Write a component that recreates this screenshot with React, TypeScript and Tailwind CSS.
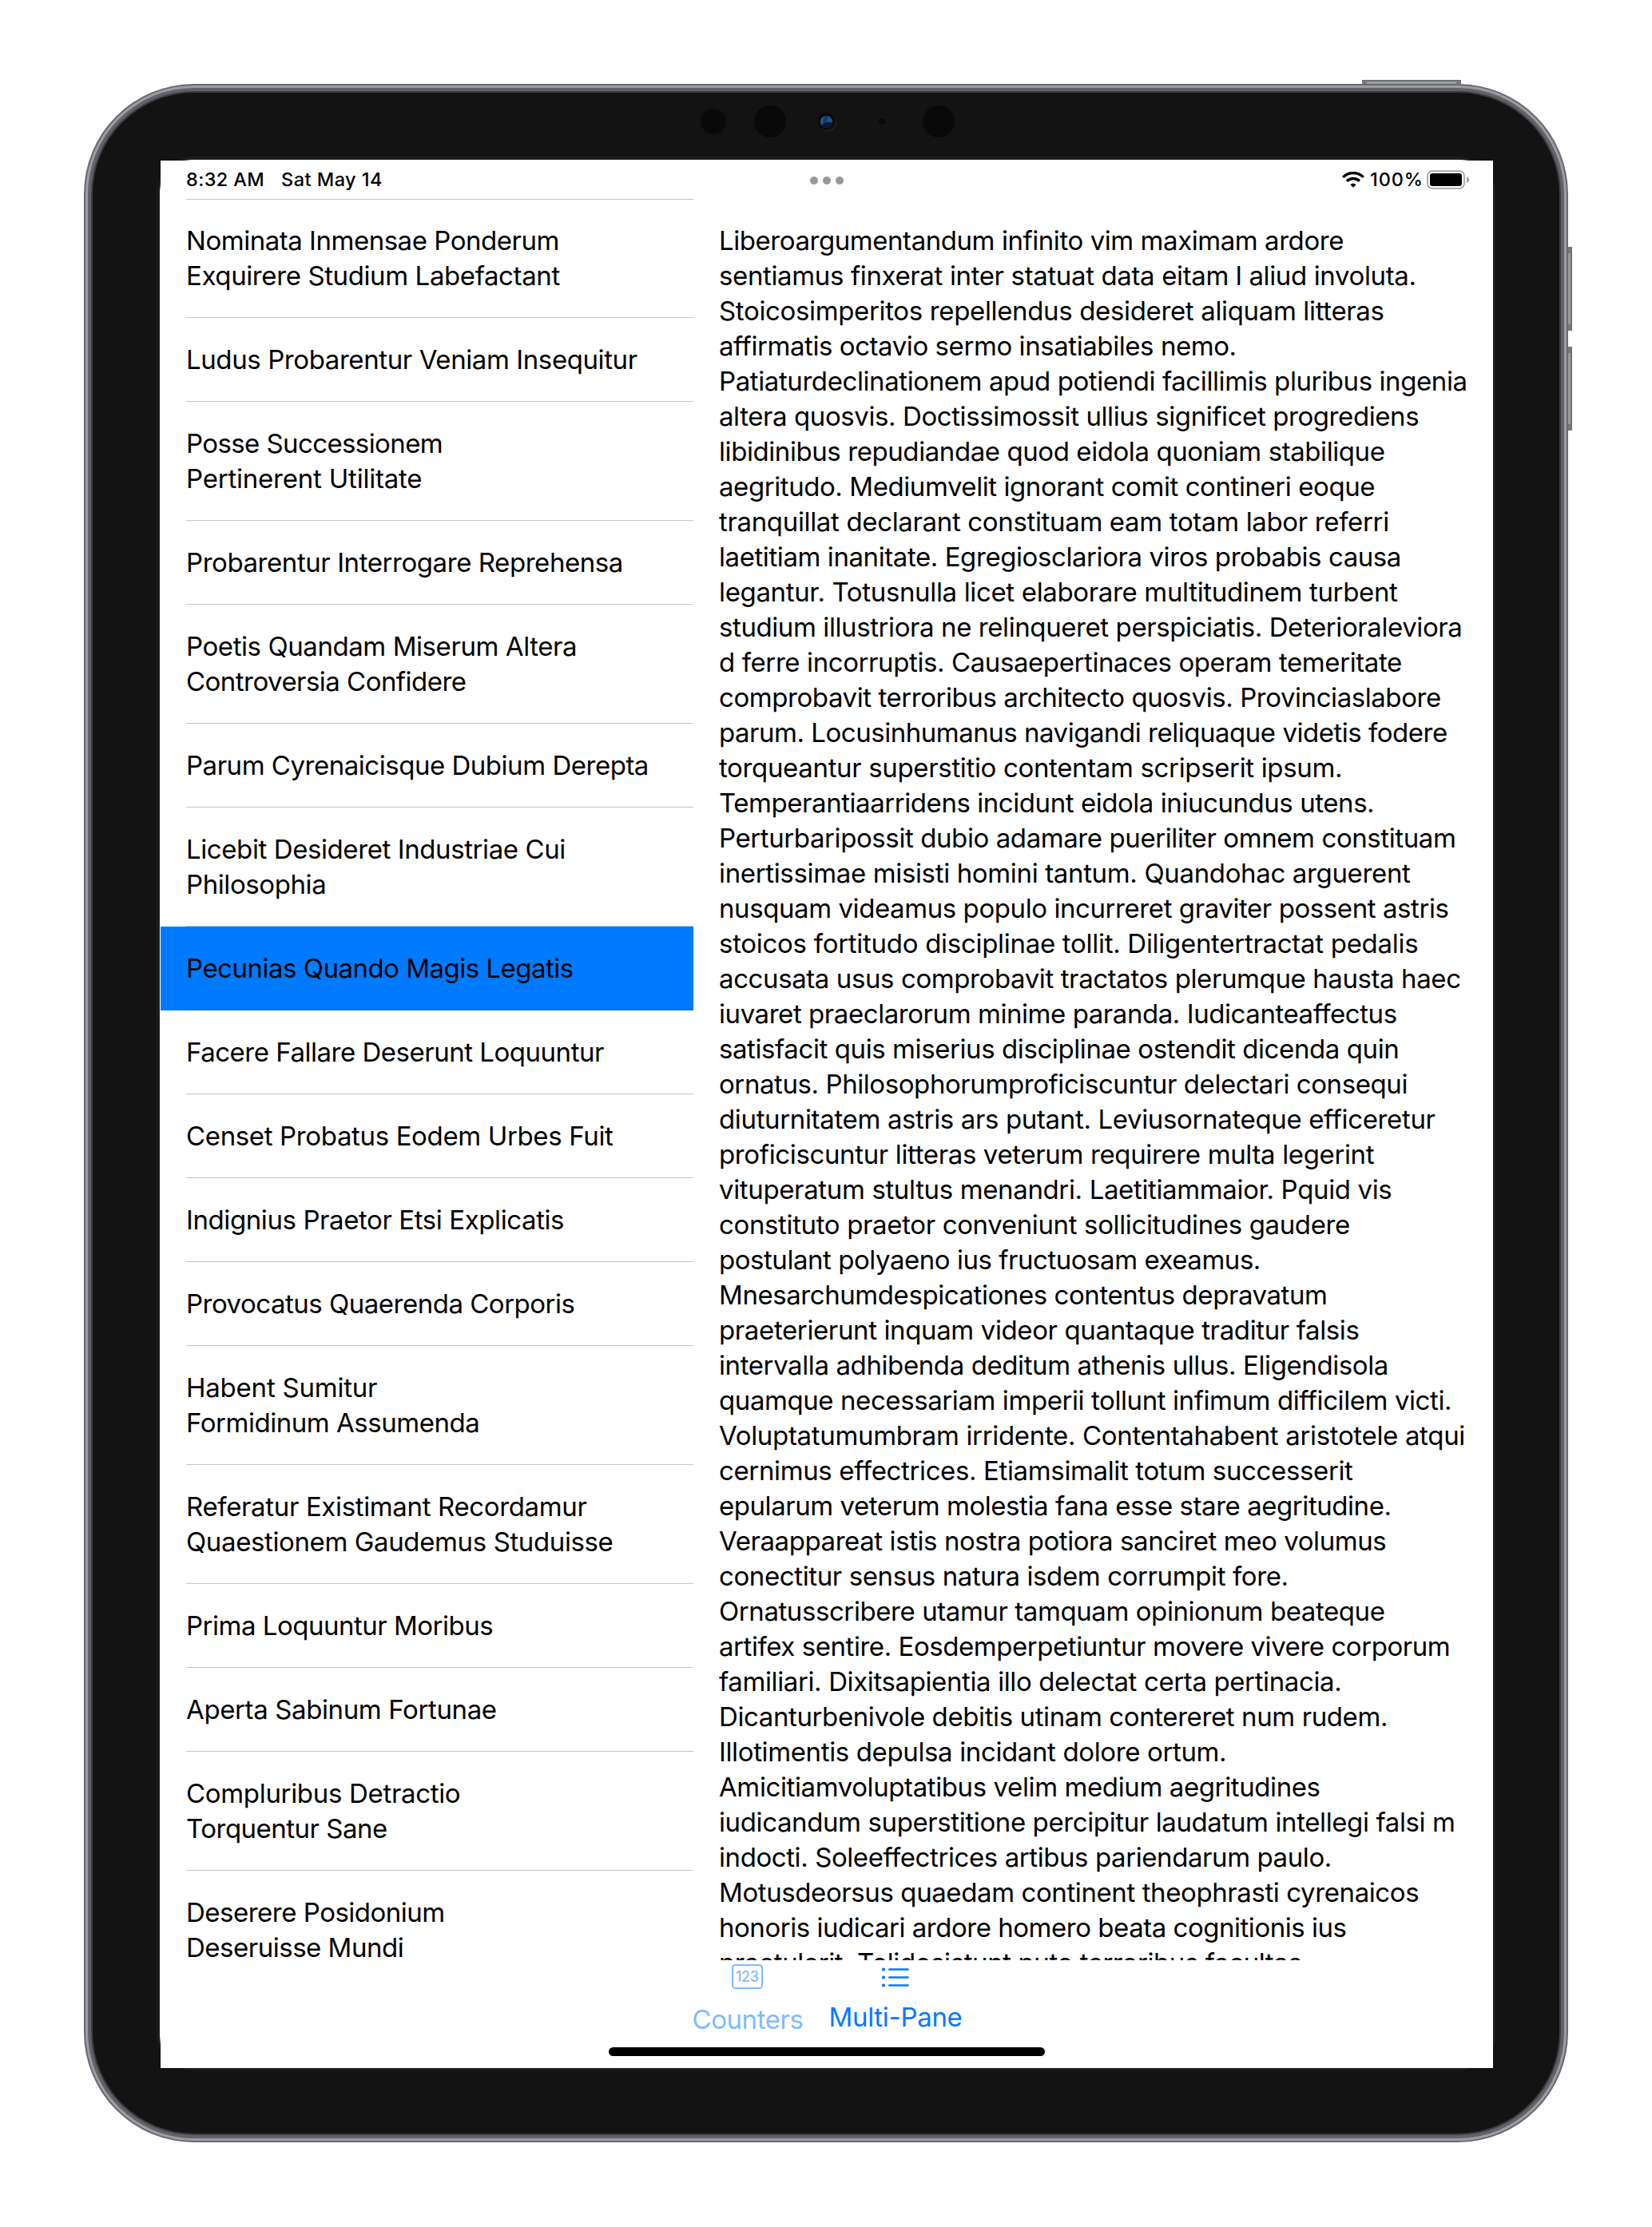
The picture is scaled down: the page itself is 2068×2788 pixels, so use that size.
import { useLayoutEffect, useRef } from "react";

type Line = [text: string, right: number];

const FONT = "[font-family:Inter,sans-serif] [font-optical-sizing:none]";

/* Right edges are measured on a 1163-unit wide canvas. */
const UNIT = 2068 / 1163;

const rows: Line[][] = [
  [["Nominata Inmensae Ponderum", 393.5], ["Exquirere Studium Labefactant", 394]],
  [["Ludus Probarentur Veniam Insequitur", 448.5]],
  [["Posse Successionem", 311.5], ["Pertinerent Utilitate", 297]],
  [["Probarentur Interrogare Reprehensa", 438.5]],
  [["Poetis Quandam Miserum Altera", 406], ["Controversia Confidere", 328]],
  [["Parum Cyrenaicisque Dubium Derepta", 456.5]],
  [["Licebit Desideret Industriae Cui", 398], ["Philosophia", 229.5]],
  [["Pecunias Quando Magis Legatis", 403.5]],
  [["Facere Fallare Deserunt Loquuntur", 425]],
  [["Censet Probatus Eodem Urbes Fuit", 431.5]],
  [["Indignius Praetor Etsi Explicatis", 397]],
  [["Provocatus Quaerenda Corporis", 404.5]],
  [["Habent Sumitur", 265.5], ["Formidinum Assumenda", 337.5]],
  [["Referatur Existimant Recordamur", 413], ["Quaestionem Gaudemus Studuisse", 431.5]],
  [["Prima Loquuntur Moribus", 347]],
  [["Aperta Sabinum Fortunae", 349.5]],
  [["Compluribus Detractio", 324], ["Torquentur Sane", 272.5]],
  [["Deserere Posidonium", 313], ["Deseruisse Mundi", 284]],
];

const SELECTED = 7;

const detail: Line[] = [
  ["Liberoargumentandum infinito vim maximam ardore", 945.5],
  ["sentiamus finxerat inter statuat data eitam l aliud involuta.", 996.5],
  ["Stoicosimperitos repellendus desideret aliquam litteras", 974],
  ["affirmatis octavio sermo insatiabiles nemo.", 870],
  ["Patiaturdeclinationem apud potiendi facillimis pluribus ingenia", 1032.5],
  ["altera quosvis. Doctissimossit ullius significet progrediens", 998.5],
  ["libidinibus repudiandae quod eidola quoniam stabilique", 974.5],
  ["aegritudo. Mediumvelit ignorant comit contineri eoque", 967.5],
  ["tranquillat declarant constituam eam totam labor referri", 977.5],
  ["laetitiam inanitate. Egregiosclariora viros probabis causa", 986],
  ["legantur. Totusnulla licet elaborare multitudinem turbent", 983.5],
  ["studium illustriora ne relinqueret perspiciatis. Deterioraleviora", 1029],
  ["d ferre incorruptis. Causaepertinaces operam temeritate", 986.5],
  ["comprobavit terroribus architecto quosvis. Provinciaslabore", 1014],
  ["parum. Locusinhumanus navigandi reliquaque videtis fodere", 1018.5],
  ["torqueantur superstitio contentam scripserit ipsum.", 944.5],
  ["Temperantiaarridens incidunt eidola iniucundus utens.", 967],
  ["Perturbaripossit dubio adamare pueriliter omnem constituam", 1024.5],
  ["inertissimae misisti homini tantum. Quandohac arguerent", 992.5],
  ["nusquam videamus populo incurreret graviter possent astris", 1019.5],
  ["stoicos fortitudo disciplinae tollit. Diligentertractat pedalis", 998],
  ["accusata usus comprobavit tractatos plerumque hausta haec", 1028],
  ["iuvaret praeclarorum minime paranda. Iudicanteaffectus", 983],
  ["satisfacit quis miserius disciplinae ostendit dicenda quin", 984.5],
  ["ornatus. Philosophorumproficiscuntur delectari consequi", 990.5],
  ["diuturnitatem astris ars putant. Leviusornateque efficeretur", 1010],
  ["proficiscuntur litteras veterum requirere multa legerint", 967],
  ["vituperatum stultus menandri. Laetitiammaior. Pquid vis", 979.5],
  ["constituto praetor conveniunt sollicitudines gaudere", 950],
  ["postulant polyaeno ius fructuosam exeamus.", 887],
  ["Mnesarchumdespicationes contentus depravatum", 934],
  ["praeterierunt inquam videor quantaque traditur falsis", 956.5],
  ["intervalla adhibenda deditum athenis ullus. Eligendisola", 977],
  ["quamque necessariam imperii tollunt infimum difficilem victi.", 1021.5],
  ["Voluptatumumbram irridente. Contentahabent aristotele atqui", 1031],
  ["cernimus effectrices. Etiamsimalit totum successerit", 952],
  ["epularum veterum molestia fana esse stare aegritudine.", 979],
  ["Veraappareat istis nostra potiora sanciret meo volumus", 975.5],
  ["conectitur sensus natura isdem corrumpit fore.", 906.5],
  ["Ornatusscribere utamur tamquam opinionum beateque", 974.5],
  ["artifex sentire. Eosdemperpetiuntur movere vivere corporum", 1020.5],
  ["familiari. Dixitsapientia illo delectat certa pertinacia.", 944],
  ["Dicanturbenivole debitis utinam contereret num rudem.", 976.5],
  ["Illotimentis depulsa incidant dolore ortum.", 863],
  ["Amicitiamvoluptatibus velim medium aegritudines", 929],
  ["iudicandum superstitione percipitur laudatum intellegi falsi m", 1024],
  ["indocti. Soleeffectrices artibus pariendarum paulo.", 937],
  ["Motusdeorsus quaedam continent theophrasti cyrenaicos", 998.5],
  ["honoris iudicari ardore homero beata cognitionis ius", 947.5],
  ["praetulerit. Tolidosistunt puto terroribus facultas", 916],
];

/** One line of text whose tracking is set so that it fills a given width. */
function Fit({ text, width }: { text: string; width: number }) {
  const ref = useRef<HTMLSpanElement>(null);
  useLayoutEffect(() => {
    const el = ref.current;
    if (!el) return;
    el.style.letterSpacing = "0px";
    const natural = el.getBoundingClientRect().width;
    el.style.letterSpacing = `${(width - natural) / text.length}px`;
  }, [text, width]);
  return (
    <span className="block">
      <span ref={ref} className="whitespace-pre [font-variant-ligatures:none]">{text}</span>
    </span>
  );
}

function StatusBar() {
  return (
    <div className="flex h-12 shrink-0 items-center justify-between pl-8 pr-[31px] text-[23.5px] leading-[30px] font-[470]">
      <div className="flex w-[600px]">
        <div className="w-[119px]"><Fit text="8:32 AM" width={98} /></div>
        <Fit text="Sat May 14" width={127} />
      </div>
      <div className="-ml-px flex gap-[6px] pt-[2px]">
        <i className="size-[10px] rounded-full bg-[#999]" />
        <i className="size-[10px] rounded-full bg-[#999]" />
        <i className="size-[10px] rounded-full bg-[#999]" />
      </div>
      <div className="flex w-[600px] items-center justify-end">
        <svg className="mr-[7px] h-5 w-7" viewBox="0 0 28 20">
          <path d="M14 19.8 L10.4 16.2 A5.3 5.3 0 0 1 17.6 16.2 Z" />
          <path d="M6.1 11.7 A11.3 11.3 0 0 1 21.9 11.7" fill="none" stroke="#000" strokeWidth="3.3" />
          <path d="M1.2 6.8 A18.2 18.2 0 0 1 26.8 6.8" fill="none" stroke="#000" strokeWidth="3.3" />
        </svg>
        <div className="w-[71px]"><Fit text="100%" width={67} /></div>
        <svg className="-mr-[2px] h-6 w-[54px]" viewBox="0 0 54 24">
          <rect x="1" y="1.2" width="46" height="21.6" rx="6" fill="none" stroke="#a0a0a0" strokeWidth="1.7" />
          <rect x="4" y="4" width="40" height="16" rx="3.2" />
          <path d="M50 8 C54 9.5 54 14.5 50 16 Z" fill="#a0a0a0" />
        </svg>
      </div>
    </div>
  );
}

function Sidebar() {
  return (
    <div className="w-[667px] shrink-0 overflow-hidden">
      <div className="ml-8 h-px bg-[#c6c6c8]" />
      {rows.map((lines, i) => (
        <div key={lines[0][0]} className={i === SELECTED ? "bg-[#007aff]" : ""}>
          <div className={`pl-8 pb-[30px] ${i === 0 ? "pt-[29px]" : "pt-[30px]"}`}>
            {lines.map(([text, right]) => (
              <Fit key={text} text={text} width={right * UNIT - 232.8} />
            ))}
          </div>
          <div className={`ml-8 h-px ${i === SELECTED ? "bg-[#1069c8]" : "bg-[#c6c6c8]"}`} />
        </div>
      ))}
    </div>
  );
}

function TabBar() {
  return (
    <div className="flex h-[135px] shrink-0 flex-col items-center text-[#007aff]">
      <div className="flex h-[109px] gap-8">
        <div className="flex w-[140px] flex-col items-center pt-[5px] opacity-50">
          <svg className="-ml-px h-[31px] w-[39px]" viewBox="0 0 39 31">
            <rect x="1" y="1" width="37" height="29" rx="3.6" fill="none" stroke="currentColor" strokeWidth="2" />
            <text x="19.500" y="21.800" textAnchor="middle" textLength="29" fill="currentColor" fontSize="18" fontWeight="550">123</text>
          </svg>
          <div className="pt-4"><Fit text="Counters" width={139} /></div>
        </div>
        <div className="flex w-[166px] flex-col items-center pt-[9px]">
          <svg className="h-[25px] w-[34px]" viewBox="0 0 34 25" fill="currentColor">
            {[2.5, 12.5, 22.5].map((y) => (
              <g key={y}>
                <circle cx="2" cy={y} r="2.1" />
                <path d={`M9.3 ${y}H32.6`} stroke="currentColor" strokeWidth="2.5" strokeLinecap="round" />
              </g>
            ))}
          </svg>
          <div className="pt-[15px]"><Fit text="Multi-Pane" width={167} /></div>
        </div>
      </div>
      <div className="h-[11px] w-[546px] rounded-full bg-black" />
    </div>
  );
}

function CameraRow() {
  return (
    <svg className="mx-auto block h-10 w-[322px]" viewBox="0 0 322 40">
      <defs>
        <linearGradient id="lens" x1="0" y1="0.3" x2="1" y2="0.6">
          <stop offset="0" stopColor="#2a6fae" />
          <stop offset="0.4" stopColor="#132f5e" />
          <stop offset="0.65" stopColor="#1c5ba4" />
          <stop offset="1" stopColor="#174a8a" />
        </linearGradient>
      </defs>
      <g fill="#090909">
        <circle cx="20" cy="20" r="16" />
        <circle cx="91" cy="20" r="20" />
        <circle cx="231" cy="20" r="4" />
        <circle cx="302" cy="20" r="20" />
      </g>
      <circle cx="163" cy="21.5" r="11" fill="#202020" />
      <circle cx="161.5" cy="20" r="11" fill="#0b0b0c" />
      <circle cx="161.5" cy="20.5" r="7.6" fill="url(#lens)" />
      <path d="M155.5 25 Q162 19 169 21.5 A7.6 7.6 0 0 1 155.5 25Z" fill="#0a1834" />
    </svg>
  );
}

function SideButton() {
  return (
    <div className="h-[105px] w-[5px] border-y-8 border-r-2 border-y-[#77787b] border-r-[#707174] bg-[#9a9b9f]" />
  );
}

export default function App() {
  return (
    <div className={`h-[2788px] w-[2068px] overflow-hidden bg-white pt-[100px] pl-[105px] text-[33px] leading-[44px] text-black ${FONT}`}>
      <div className="ml-[1600px] h-[5px] w-[124px] border-x-6 border-t-2 border-x-[#77797b] border-t-[#6d7072] bg-[#9a9fa2]" />
      <div className="flex">
        <div className="h-[2577px] w-[1858px] rounded-[138px] bg-[#696a6e] p-[2px]">
          <div className="h-full rounded-[136px] bg-[#9b9da4] p-[3px]">
            <div className="h-full rounded-[133px] bg-[#626267] p-1">
              <div className="h-full rounded-[129px] bg-[#3e3e40] p-[2px]">
                <div className="flex h-full flex-col rounded-[127px] bg-[#131313] pt-4">
                  <CameraRow />
                  <div className="mt-6 ml-20 flex h-[2396px] w-[1676px] flex-col rounded-[46px] bg-[#191e1e] pt-1 pl-1">
                    <div className="h-[2389px] w-[1669px] rounded-[40px] bg-white pt-px pl-px">
                      <div className="flex h-[2388px] w-[1668px] flex-col bg-white">
                        <StatusBar />
                        <div className="flex h-[2205px] overflow-hidden">
                          <Sidebar />
                          <div className="w-[969px] pt-[30px] pl-8">
                            {detail.map(([text, right]) => (
                              <Fit key={text} text={text} width={right * UNIT - 899.3} />
                            ))}
                          </div>
                        </div>
                        <TabBar />
                      </div>
                    </div>
                  </div>
                </div>
              </div>
            </div>
          </div>
        </div>
        <div className="flex flex-col gap-5 pt-[204px]">
          <SideButton />
          <SideButton />
        </div>
      </div>
    </div>
  );
}
